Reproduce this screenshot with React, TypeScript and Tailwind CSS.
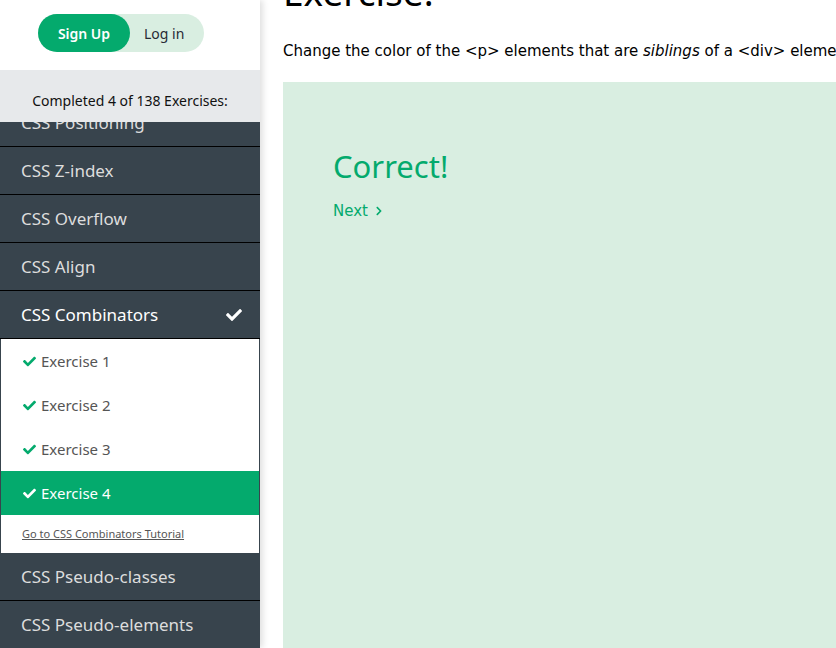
import React from "react";
import { FaCheck, FaChevronRight } from "react-icons/fa";

const seg = { fontFamily: '"Noto Sans", "Open Sans", sans-serif' };
const ver = { fontFamily: '"DejaVu Sans", Verdana, sans-serif' };

function DarkItem({ label, active }: { label: string; active?: boolean }) {
  return (
    <div
      className={`flex h-[48px] items-center justify-between border-b border-black bg-[#38444d] pl-[21px] pr-[18px] text-[17px] ${
        active ? "text-white" : "text-[#dddddd]"
      }`}
    >
      <span>{label}</span>
      {active && <FaCheck className="text-[16px] text-white" />}
    </div>
  );
}

function SubItem({ label, active }: { label: string; active?: boolean }) {
  return (
    <div
      className={`flex h-[44px] items-center gap-[5px] pl-[22px] text-[15px] ${
        active ? "bg-[#04aa6d] text-white" : "text-[#555555]"
      }`}
    >
      <FaCheck className={`text-[13px] ${active ? "text-white" : "text-[#04aa6d]"}`} />
      <span>{label}</span>
    </div>
  );
}

export default function App() {
  return (
    <div className="flex h-[648px] w-[836px] overflow-hidden bg-white">
      <aside
        className="relative z-10 flex w-[260px] shrink-0 flex-col shadow-[3px_0_6px_rgba(0,0,0,0.12)]"
        style={seg}
      >
        <div className="flex h-[70px] items-start bg-white pt-[14px] pl-[38px]">
          <div className="flex h-[38px] items-center rounded-full bg-[#d9eee1]">
            <button className="h-[38px] w-[92px] rounded-full bg-[#04aa6d] text-[14px] font-semibold text-white">
              Sign Up
            </button>
            <span className="pl-[14px] pr-[20px] text-[14px] text-[#282a35]">Log in</span>
          </div>
        </div>
        <div className="flex h-[52px] items-center justify-center bg-[#e7e9eb] pt-[8px] text-[14px] text-[#111]">
          Completed 4 of 138 Exercises:
        </div>
        <div className="flex-1 overflow-hidden bg-[#38444d]">
          <div className="-mt-[23px]">
            <DarkItem label="CSS Positioning" />
            <DarkItem label="CSS Z-index" />
            <DarkItem label="CSS Overflow" />
            <DarkItem label="CSS Align" />
            <DarkItem label="CSS Combinators" active />
            <div className="border-x border-[#38444d] bg-white">
              <div>
                <SubItem label="Exercise 1" />
                <SubItem label="Exercise 2" />
                <SubItem label="Exercise 3" />
                <SubItem label="Exercise 4" active />
              </div>
              <div className="flex h-[38px] items-center pl-[21px]">
                <a className="text-[11px] text-[#555] underline">Go to CSS Combinators Tutorial</a>
              </div>
            </div>
            <DarkItem label="CSS Pseudo-classes" />
            <DarkItem label="CSS Pseudo-elements" />
          </div>
        </div>
      </aside>
      <main className="flex min-w-0 flex-1 flex-col pl-[23px]">
        <h1 className="-mt-[30px] whitespace-nowrap text-[37px] leading-[1.2] text-black" style={seg}>
          Exercise:
        </h1>
        <p className="mt-[26px] whitespace-nowrap text-[15px] text-black" style={ver}>
          Change the color of the &lt;p&gt; elements that are <i>siblings</i> of a &lt;div&gt; element.
        </p>
        <div className="mt-[19px] flex-1 bg-[#d9eee1] pl-[50px] pt-[62px]" style={ver}>
          <div className="text-[31px] leading-[1.45] text-[#04aa6d]" style={seg}>
            Correct!
          </div>
          <div className="mt-[11px] flex items-center gap-[6px] text-[15px] text-[#04aa6d]">
            Next <FaChevronRight className="text-[10px]" />
          </div>
        </div>
      </main>
    </div>
  );
}
